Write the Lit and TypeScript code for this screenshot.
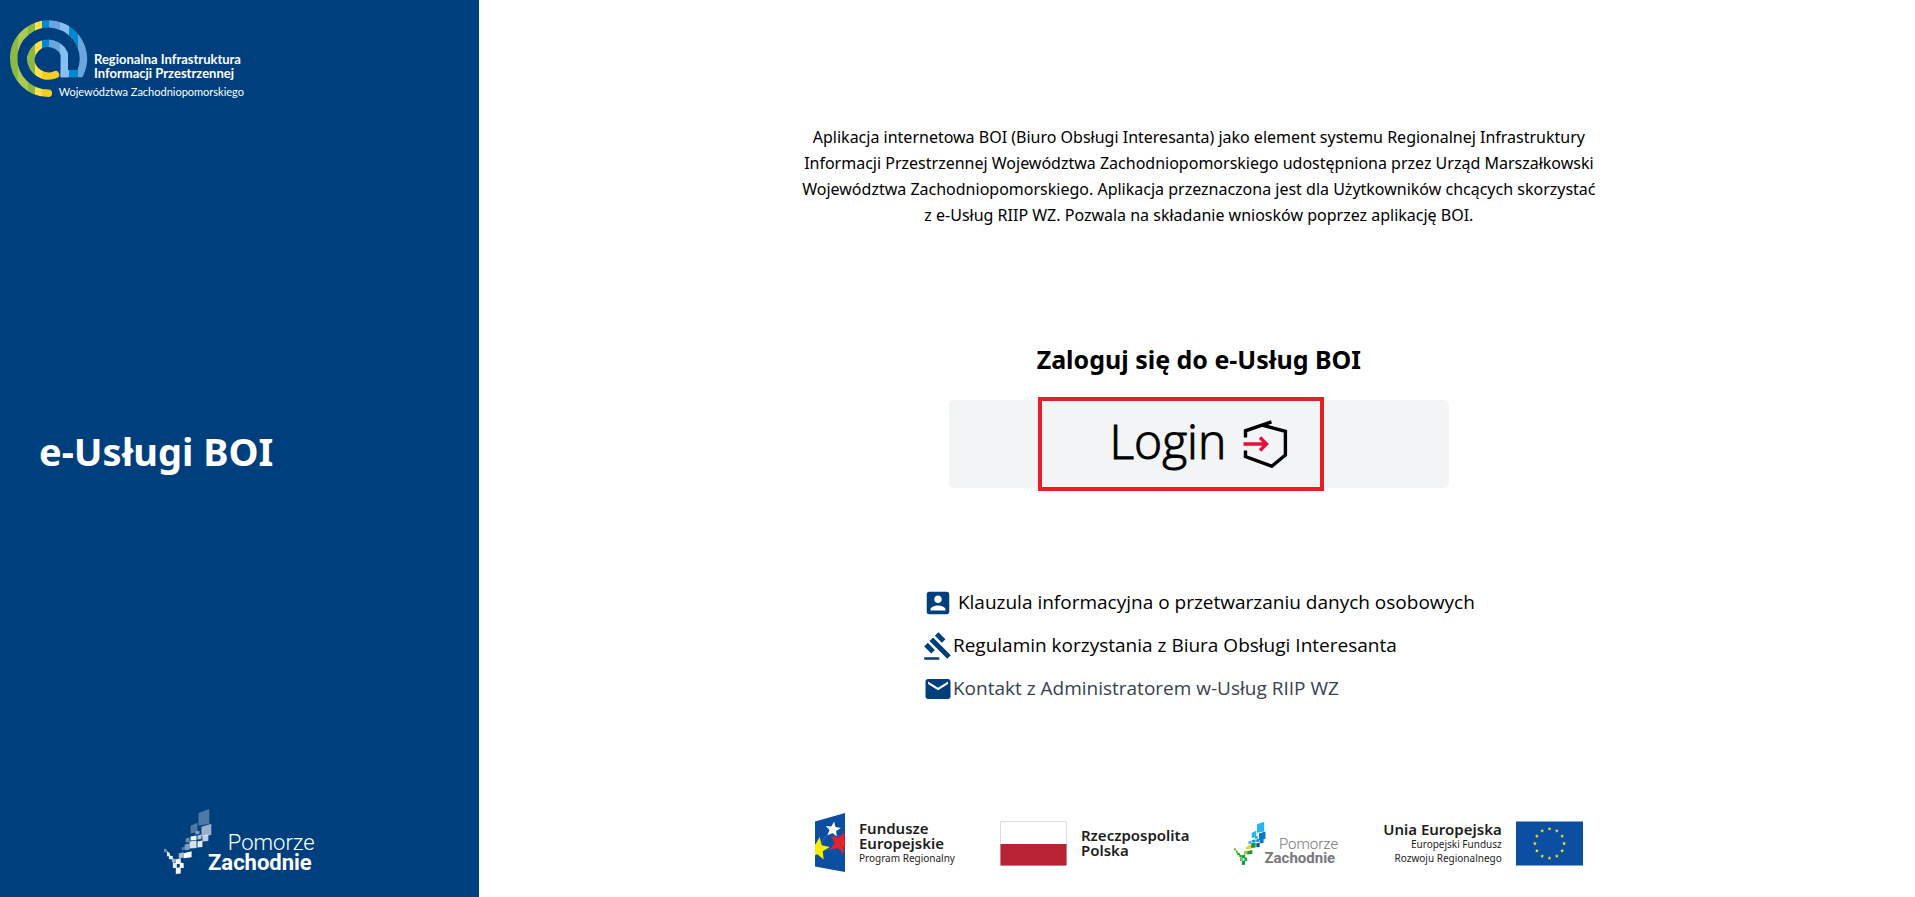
import { LitElement, html, css, svg } from "lit";
import { customElement, property } from "lit/decorators.js";

/** Tiles of the Pomorze Zachodnie mark: x, y, width, height, slant, colour, tint opacity. */
const TILES: [number, number, number, number, number, string, number][] = [
  [35, 4, 11, 17, 4, "#29b6f0", 0.3],
  [27, 18, 7, 11, 3, "#29b6f0", 0.3],
  [38, 19, 10, 13, 3, "#0a78c4", 0.6],
  [32, 26, 4, 4, 1, "#1a9be0", 0.5],
  [27, 31, 6, 5, 1, "#1a9be0", 0.95],
  [34, 30, 4, 5, 1, "#0a78c4", 0.7],
  [39, 30, 6, 7, 1, "#0a78c4", 0.75],
  [22, 33, 4, 5, 1, "#29b6f0", 0.4],
  [26, 36, 7, 8, 1, "#15974a", 0.85],
  [34, 36, 5, 7, 1, "#06529b", 0.9],
  [21, 39, 5, 7, 1, "#f5d319", 0.5],
  [18, 42, 3, 4, 1, "#c4d52c", 0.3],
  [20, 47, 8, 7, 2, "#15974a", 1],
  [15, 48, 5, 6, 1, "#a4ca38", 0.65],
  [0, 44, 3, 4, -1, "#6cbf3c", 0.4],
  [3, 47, 3, 5, -2, "#6cbf3c", 0.9],
  [5, 51, 4, 4, -1, "#15a34a", 0.9],
  [8, 54, 4, 4, -1, "#15a34a", 0.6],
  [12, 54, 5, 6, 1, "#15a34a", 0.95],
  [9, 58, 4, 6, -1, "#6cbf3c", 0.9],
  [16, 58, 4, 6, -1, "#15a34a", 1],
  [12, 63, 5, 7, 1, "#15974a", 0.95],
];

@customElement("pomorze-logo")
export class PomorzeLogo extends LitElement {
  @property({ type: Boolean, reflect: true }) mono = false;

  static styles = css`
    :host {
      display: flex;
      align-items: flex-end;
      font-family: Roboto, "Noto Sans", sans-serif;
      font-size: 15px;
      line-height: 14px;
      color: #77787b;
    }
    :host([mono]) {
      font-size: 22px;
      line-height: 20px;
      color: #fff;
    }
    .mark {
      display: block;
      width: 30px;
      height: 44px;
      overflow: visible;
    }
    :host([mono]) .mark {
      width: 44px;
      height: 66px;
    }
    .words {
      display: grid;
      justify-items: end;
    }
    .light {
      font-weight: 300;
    }
    .bold {
      font-weight: 700;
      padding-right: 3px;
    }
    :host([mono]) .words {
      padding-bottom: 1px;
    }
  `;

  render() {
    return html`
      <svg class="mark" viewBox="0 3 44 67" preserveAspectRatio="xMinYMid meet" aria-hidden="true">
        ${TILES.map(([x, y, w, h, s, c, o]) => {
          const pts = `${x},${y + Math.max(s, 0)} ${x + w},${y + Math.max(-s, 0)} ${x + w},${y + h - Math.max(s, 0) / 2} ${x},${y + h}`;
          return svg`<polygon points=${pts} fill=${this.mono ? "#fff" : c} fill-opacity=${this.mono ? o : 1} />`;
        })}
      </svg>
      <span class="words"><span class="light">Pomorze</span><span class="bold">Zachodnie</span></span>
    `;
  }
}

@customElement("riip-logo")
export class RiipLogo extends LitElement {
  static styles = css`
    :host {
      display: grid;
      width: 234px;
      color: #fff;
      font-family: Lato, "Noto Sans", sans-serif;
      font-size: 13px;
      line-height: 14px;
    }
    .mark {
      grid-area: 1 / 1;
      display: block;
      width: 78px;
      height: 78px;
    }
    .words {
      grid-area: 1 / 1;
      display: grid;
      justify-items: end;
      padding-top: 32px;
    }
    .name {
      font-weight: 700;
      width: 150px;
      white-space: nowrap;
    }
    .region {
      font-size: 11px;
      line-height: 24px;
    }
  `;

  private stops(list: [number, number, string][]) {
    return list.map(
      ([a, b, c]) => svg`<stop offset=${(a - 10) / 77} stop-color=${c} /><stop offset=${(b - 10) / 77} stop-color=${c} />`
    );
  }

  render() {
    const left: [number, number, string][] = [
      [10, 18.5, "#8cb843"],
      [18.5, 28, "#abc953"],
      [28, 35, "#8cb843"],
      [35, 42, "#fde04b"],
    ];
    const top: [number, number, string][] = [
      ...left,
      [42, 49, "#0089d0"],
      [49, 60, "#6aa6de"],
      [60, 69, "#86bff0"],
      [69, 78.5, "#0089d0"],
      [78.5, 87, "#6aa6de"],
    ];
    const bottom: [number, number, string][] = [...left, [42, 87, "#f6cd20"]];
    return html`
      <svg class="mark" viewBox="10 20 78 78" fill="none" stroke-width="7.4" aria-hidden="true">
        <defs>
          <linearGradient id="t" gradientUnits="userSpaceOnUse" x1="10" y1="0" x2="87" y2="0">${this.stops(top)}</linearGradient>
          <linearGradient id="b" gradientUnits="userSpaceOnUse" x1="10" y1="0" x2="87" y2="0">${this.stops(bottom)}</linearGradient>
        </defs>
        <path stroke="url(#b)" stroke-linecap="round" d="M48.4 93.3A34.8 34.8 0 0 1 13.7 58.5" />
        <path stroke="url(#t)" d="M13.7 59A34.8 34.8 0 1 1 80 73.6L60.6 73.6" />
        <path stroke="url(#b)" stroke-linecap="round" d="M55.5 74.6A17.9 17.9 0 0 1 30.7 58.5" />
        <path stroke="url(#t)" d="M30.7 59A17.6 17.9 0 0 1 64.3 54L64.3 77.3" />
      </svg>
      <div class="words">
        <span class="name">Regionalna Infrastruktura</span>
        <span class="name">Informacji Przestrzennej</span>
        <span class="region">Województwa Zachodniopomorskiego</span>
      </div>
    `;
  }
}

@customElement("app-root")
export class AppRoot extends LitElement {
  static styles = css`
    :host {
      display: grid;
      grid-template-columns: 1fr 3fr;
      min-height: 100vh;
      background: #fff;
      color: #000;
      font-family: "Segoe UI", "Noto Sans", "Open Sans", sans-serif;
      font-size: 16px;
    }
    .side {
      display: flex;
      flex-direction: column;
      justify-content: space-between;
      background: #003f7d;
      color: #fff;
      padding: 20px 0 23px;
    }
    .brand {
      padding-left: 10px;
    }
    .title {
      margin: 0;
      padding: 0 0 10px 39px;
      font-size: 38px;
      line-height: 48px;
      font-weight: 700;
    }
    .partner {
      display: flex;
      justify-content: center;
    }
    .main {
      display: flex;
      flex-direction: column;
      align-items: center;
      padding: 124px 0 24px 4px;
    }
    .intro {
      margin: 0;
      max-width: 816px;
      line-height: 26px;
      text-align: center;
    }
    .login {
      display: grid;
      justify-items: center;
      width: 500px;
      margin-top: 114px;
    }
    .heading {
      margin: 0 0 24px;
      font-size: 25px;
      line-height: 34px;
      font-weight: 700;
    }
    .action {
      position: relative;
      width: 100%;
    }
    .button {
      display: flex;
      align-items: center;
      justify-content: center;
      gap: 17px;
      width: 100%;
      height: 88px;
      padding: 0;
      border: 0;
      border-radius: 5px;
      background: #f3f4f6;
      color: #000;
      font-family: "Open Sans", "Noto Sans", sans-serif;
      font-size: 48px;
      font-weight: 300;
      line-height: 66px;
      cursor: pointer;
    }
    .label {
      padding-bottom: 6px;
      -webkit-text-stroke: 1px #000;
    }
    .enter {
      display: block;
      width: 45px;
      height: 48px;
    }
    .frame {
      position: absolute;
      top: -3px;
      bottom: -3px;
      left: 89px;
      right: 125px;
      border: 4px solid #e81e25;
      pointer-events: none;
    }
    .links {
      display: grid;
      gap: 13px;
      margin: 100px 0 40px;
      padding: 0;
      list-style: none;
      font-family: "Segoe UI", "Open Sans", "Noto Sans", sans-serif;
      font-size: 19px;
      line-height: 28px;
    }
    .link {
      display: flex;
      color: inherit;
      text-decoration: none;
    }
    .link.spaced {
      gap: 5px;
    }
    .link.muted {
      color: #374151;
    }
    .icon {
      display: block;
      width: 30px;
      height: 30px;
      fill: #003f7d;
    }
    .funds {
      display: flex;
      align-items: center;
      gap: 45px;
      margin-top: auto;
      color: #1d1d1b;
      font-family: "Noto Sans", "Open Sans", sans-serif;
      font-size: 15px;
      line-height: 15px;
      font-weight: 600;
    }
    .fund {
      display: flex;
      align-items: center;
      gap: 14px;
    }
    .lines {
      display: grid;
    }
    .lines.end {
      justify-items: end;
    }
    .small {
      font-size: 10px;
      line-height: 14px;
      font-weight: 400;
    }
    .emblem {
      display: block;
      width: 30px;
      height: 60px;
    }
    .flag {
      display: block;
      width: 67px;
      height: 45px;
    }
  `;

  private star(cx: number, cy: number, r: number, color: string, turn = 0, inner = 0.42) {
    const pts = Array.from({ length: 10 }, (_, i) => {
      const a = ((i * 36 - 90 + turn) * Math.PI) / 180;
      const d = i % 2 ? r * inner : r;
      return `${(cx + d * Math.cos(a)).toFixed(2)},${(cy + d * Math.sin(a)).toFixed(2)}`;
    }).join(" ");
    return svg`<polygon points=${pts} fill=${color} />`;
  }

  render() {
    const ring = Array.from({ length: 12 }, (_, i) => (i * Math.PI) / 6);
    return html`
      <aside class="side">
        <riip-logo class="brand"></riip-logo>
        <h1 class="title">e-Usługi BOI</h1>
        <div class="partner"><pomorze-logo mono></pomorze-logo></div>
      </aside>
      <main class="main">
        <p class="intro">
          Aplikacja internetowa BOI (Biuro Obsługi Interesanta) jako element systemu Regionalnej Infrastruktury
          Informacji Przestrzennej Województwa Zachodniopomorskiego udostępniona przez Urząd Marszałkowski
          Województwa Zachodniopomorskiego. Aplikacja przeznaczona jest dla Użytkowników chcących skorzystać
          z&nbsp;e-Usług RIIP WZ. Pozwala na składanie wniosków poprzez aplikację BOI.
        </p>
        <section class="login">
          <h2 class="heading">Zaloguj się do e-Usług BOI</h2>
          <div class="action">
            <button class="button" type="button">
              <span class="label">Login</span>
              <svg class="enter" viewBox="0 0 45 48" fill="none" stroke="#000" stroke-width="3.4" aria-hidden="true">
                <path d="M2.5 17.5V10.8L28.5 1.8M19 5.2L42.4 11.4V35L28.8 46.2L2.5 36.6V30.5" />
                <path d="M0.5 24H23M17 17.5L23.5 24L17 30.5" stroke="#e4103c" />
              </svg>
            </button>
            <span class="frame"></span>
          </div>
        </section>
        <ul class="links">
          <li>
            <a class="link spaced" href="#klauzula">
              <svg class="icon" viewBox="0 0 24 24" aria-hidden="true">
                <path d="M3 5v14a2 2 0 0 0 2 2h14c1.1 0 2-.9 2-2V5c0-1.1-.9-2-2-2H5a2 2 0 0 0-2 2zm12 4c0 1.66-1.34 3-3 3s-3-1.34-3-3 1.34-3 3-3 3 1.34 3 3zm-9 8c0-2 4-3.1 6-3.1s6 1.1 6 3.1v1H6v-1z" />
              </svg>
              <span>Klauzula informacyjna o przetwarzaniu danych osobowych</span>
            </a>
          </li>
          <li>
            <a class="link" href="#regulamin">
              <svg class="icon" viewBox="0 0 24 24" aria-hidden="true">
                <path d="M1 21h12v2H1zM5.245 8.07l2.83-2.827 14.14 14.142-2.828 2.828zM12.317 1l5.657 5.656-2.83 2.83-5.654-5.66zM3.825 9.485l5.657 5.657-2.828 2.828-5.657-5.657z" />
              </svg>
              <span>Regulamin korzystania z Biura Obsługi Interesanta</span>
            </a>
          </li>
          <li>
            <a class="link muted" href="#kontakt">
              <svg class="icon" viewBox="0 0 24 24" aria-hidden="true">
                <path d="M20 4H4c-1.1 0-1.99.9-1.99 2L2 18c0 1.1.9 2 2 2h16c1.1 0 2-.9 2-2V6c0-1.1-.9-2-2-2zm0 4l-8 5-8-5V6l8 5 8-5v2z" />
              </svg>
              <span>Kontakt z Administratorem w-Usług RIIP WZ</span>
            </a>
          </li>
        </ul>
        <footer class="funds">
          <div class="fund">
            <svg class="emblem" viewBox="0 0 30 60" aria-hidden="true">
              <defs><clipPath id="board"><path d="M0 8.5L30 0V59L0 53.5Z" /></clipPath></defs>
              <g clip-path="url(#board)">
                <path d="M0 0H30V60H0Z" fill="#0b4ea2" />
                <ellipse cx="15.5" cy="28.5" rx="9.5" ry="7" fill="none" stroke="#3a6cb4" stroke-width="0.8" transform="rotate(-35 15.5 28.5)" />
                ${this.star(3, 36, 12, "#ffed00", 8, 0.44)} ${this.star(25, 30, 12, "#e2232a", 20, 0.44)}
                ${this.star(18, 16.5, 8, "#fff", 8, 0.44)}
              </g>
            </svg>
            <div class="lines"><span>Fundusze</span><span>Europejskie</span><span class="small">Program Regionalny</span></div>
          </div>
          <div class="fund">
            <svg class="flag" viewBox="0 0 67 45" aria-hidden="true">
              <path d="M0.5 0.5H66.5V44.5H0.5Z" fill="#fff" stroke="#dcdcdc" />
              <path d="M0.5 23H66.5V44.5H0.5Z" fill="#b72234" />
            </svg>
            <div class="lines"><span>Rzeczpospolita</span><span>Polska</span></div>
          </div>
          <pomorze-logo></pomorze-logo>
          <div class="fund">
            <div class="lines end"><span>Unia Europejska</span><span class="small">Europejski Fundusz</span><span class="small">Rozwoju Regionalnego</span></div>
            <svg class="flag" viewBox="0 0 67 45" aria-hidden="true">
              <path d="M0 0H67V45H0Z" fill="#0b4ea2" />
              <path d="M0 0.5H67M0 44.5H67" stroke="#7fa6d3" />
              ${ring.map((a) => this.star(33.5 + 14.6 * Math.sin(a), 22.5 - 14.6 * Math.cos(a), 2.1, "#ffed00"))}
            </svg>
          </div>
        </footer>
      </main>
    `;
  }
}
